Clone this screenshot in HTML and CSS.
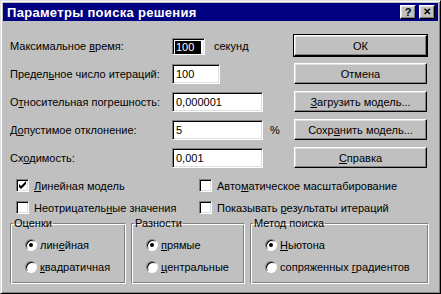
FILE: index.html
```html
<!DOCTYPE html>
<html lang="ru">
<head>
    <meta charset="UTF-8">
    <title>Параметры поиска решения</title>
    <link rel="stylesheet" href="styles.css">
</head>
<body>
    <div class="window">
        <div class="titlebar">
            <span class="title">Параметры поиска решения</span>
            <div class="title-buttons">
                <span class="tbtn">?</span>
                <span class="tbtn close">&#x2715;</span>
            </div>
        </div>

        <div class="main">
            <div class="fields">
                <div class="row">
                    <label>Максимальное <u>в</u>ремя:</label>
                    <span class="input w-short sel"><span class="hl">100</span></span>
                    <span class="unit">секунд</span>
                </div>
                <div class="row">
                    <label>Предел<u>ь</u>ное число итераций:</label>
                    <span class="input w-mid">100</span>
                </div>
                <div class="row">
                    <label>О<u>т</u>носительная погрешность:</label>
                    <span class="input w-long">0,000001</span>
                </div>
                <div class="row">
                    <label>Д<u>о</u>пустимое отклонение:</label>
                    <span class="input w-long">5</span>
                    <span class="unit pct">%</span>
                </div>
                <div class="row">
                    <label>Сх<u>о</u>димость:</label>
                    <span class="input w-long">0,001</span>
                </div>
            </div>
            <div class="buttons">
                <button class="btn default">ОК</button>
                <button class="btn">Отмена</button>
                <button class="btn"><u>З</u>агрузить модель...</button>
                <button class="btn">Сохр<u>а</u>нить модель...</button>
                <button class="btn"><u>С</u>правка</button>
            </div>
        </div>

        <div class="checks">
            <div class="check"><span class="box"><svg width="9" height="9" viewBox="0 0 9 9"><path d="M1 3 L1 6 L3 8 L8 3 L8 0 L3 5 Z" fill="#000"/></svg></span><span><u>Л</u>инейная модель</span></div>
            <div class="check"><span class="box"></span><span>Авто<u>м</u>атическое масштабирование</span></div>
            <div class="check"><span class="box"></span><span>Неотрицатель<u>н</u>ые значения</span></div>
            <div class="check"><span class="box"></span><span>Показывать <u>р</u>езультаты итераций</span></div>
        </div>

        <div class="groups">
            <fieldset class="group g1">
                <legend>Оценки</legend>
                <div class="radio"><span class="dot on"></span><span>лин<u>е</u>йная</span></div>
                <div class="radio"><span class="dot"></span><span><u>к</u>вадратичная</span></div>
            </fieldset>
            <fieldset class="group g2">
                <legend>Разности</legend>
                <div class="radio"><span class="dot on"></span><span><u>п</u>рямые</span></div>
                <div class="radio"><span class="dot"></span><span><u>ц</u>ентральные</span></div>
            </fieldset>
            <fieldset class="group g3">
                <legend>Метод поиска</legend>
                <div class="radio"><span class="dot on"></span><span><u>Н</u>ьютона</span></div>
                <div class="radio"><span class="dot"></span><span>сопряженных <u>г</u>радиентов</span></div>
            </fieldset>
        </div>
    </div>
</body>
</html>
```
FILE: styles.css
```css
body { margin: 0; background: #c0c0c0; font-family: "Liberation Sans", Arial, sans-serif; font-size: 11px; color: #000; }
u { text-decoration: underline; text-underline-offset: 1px; }

.window { width: 441px; height: 294px; box-sizing: border-box; padding: 2px; background: #c0c0c0;
    border: 1px solid; border-color: #dfdfdf #000 #000 #dfdfdf;
    box-shadow: inset 1px 1px #fff, inset -1px -1px #808080; }

.titlebar { height: 18px; background: #000080; display: flex; align-items: center; justify-content: space-between; padding: 0 3px 0 4px; }
.title { color: #fff; font-weight: bold; font-size: 13px; letter-spacing: 0.3px; }
.title-buttons { display: flex; gap: 3px; }
.tbtn { width: 16px; height: 14px; box-sizing: border-box; background: #c0c0c0; display: flex; align-items: center; justify-content: center;
    font-weight: bold; font-size: 11px; line-height: 1;
    border: 1px solid; border-color: #fff #000 #000 #fff; box-shadow: inset -1px -1px #808080, inset 1px 1px #dfdfdf; }
.tbtn.close { font-size: 10px; }

.main { display: flex; padding: 14px 0 0 7px; }
.fields { width: 284px; display: flex; flex-direction: column; gap: 8px; padding-top: 1px; }
.row { display: flex; align-items: center; height: 20px; }
.row label { width: 162px; }

.input { height: 20px; box-sizing: border-box; background: #fff; padding: 3px 2px 0 3px; line-height: 13px;
    border: 1px solid; border-color: #808080 #fff #fff #808080; box-shadow: inset 1px 1px #000, inset -1px -1px #dfdfdf; }
.w-short { width: 33px; height: 17px; padding: 2px 1px 0 2px; }
.w-mid { width: 48px; }
.w-long { width: 91px; }
.hl { background: #000; color: #fff; display: inline-block; width: 25px; padding-left: 1px; }
.unit { margin-left: 9px; }
.unit.pct { margin-left: 7px; }

.buttons { display: flex; flex-direction: column; gap: 7px; }
.btn { width: 133px; height: 21px; box-sizing: border-box; background: #c0c0c0; font: inherit; padding: 0;
    border: 1px solid; border-color: #fff #000 #000 #fff; box-shadow: inset -1px -1px #808080, inset 1px 1px #dfdfdf; }
.btn.default { outline: 1px solid #000; outline-offset: 0; }

.checks { display: grid; grid-template-columns: 183px auto; row-gap: 9px; padding: 11px 0 0 13px; }
.check { display: flex; align-items: center; height: 13px; }
.box { width: 13px; height: 13px; box-sizing: border-box; background: #fff; margin-right: 5px; display: flex; align-items: center; justify-content: center;
    border: 1px solid; border-color: #808080 #fff #fff #808080; box-shadow: inset 1px 1px #000, inset -1px -1px #dfdfdf; }

.groups { display: flex; padding: 4px 0 0 7px; gap: 5px; }
.group { margin: 0; padding: 9px 0 0 14px; height: 66px; box-sizing: border-box;
    border: 1px solid; border-color: #808080 #fff #fff #808080; box-shadow: inset 1px 1px #fff, inset -1px -1px #808080; }
.group legend { padding: 0 1px; margin-left: -12px; line-height: 11px; }
.g1 { width: 116px; }
.g2 { width: 114px; }
.g3 { width: 179px; }
.radio { display: flex; align-items: center; height: 14px; margin-bottom: 8px; }
.dot { width: 12px; height: 12px; border-radius: 50%; background: #fff; margin-right: 3px; box-sizing: border-box; position: relative;
    border: 1px solid; border-color: #808080 #fff #fff #808080; box-shadow: inset 1px 1px #000; }
.dot.on::after { content: ""; position: absolute; left: 3px; top: 3px; width: 4px; height: 4px; border-radius: 50%; background: #000; }
```
